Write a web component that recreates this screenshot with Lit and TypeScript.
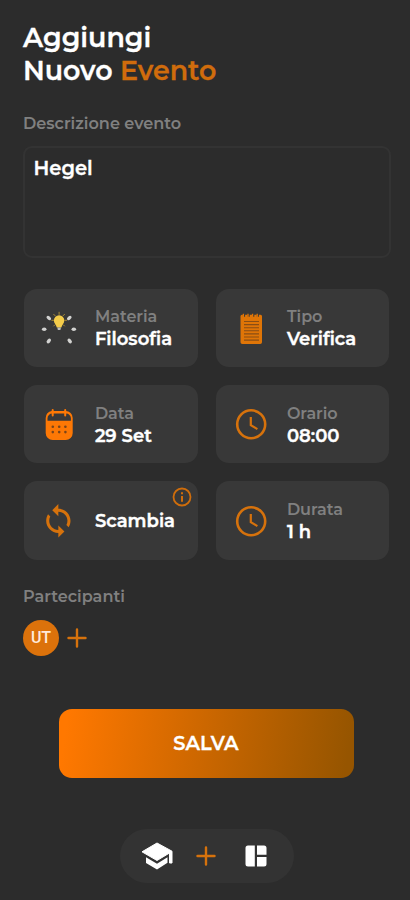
import { LitElement, html, css, svg } from "lit";
import { customElement, property } from "lit/decorators.js";

const burst = svg`
  <g fill="#d2d2d0">
    <ellipse cx="8.800" cy="9" rx="2.600" ry="1.700" transform="rotate(40 8.800 9)"/>
    <ellipse cx="29.300" cy="9" rx="2.600" ry="1.700" transform="rotate(-40 29.300 9)"/>
    <ellipse cx="4.200" cy="20.300" rx="2.300" ry="1.800"/>
    <ellipse cx="33.800" cy="20.300" rx="2.300" ry="1.800"/>
    <ellipse cx="8.800" cy="32" rx="2.700" ry="1.700" transform="rotate(-48 8.800 32)"/>
    <ellipse cx="29.700" cy="32" rx="2.700" ry="1.700" transform="rotate(48 29.700 32)"/>
  </g>
  <g transform="translate(.4 .8)">
  <path d="M18.700 2v3M13 4.200l2 2M24.400 4.200l-2 2M11 10.500h2.500M24 10.500h2.500M13 16.500l1.600-1.600M24.400 16.500l-1.600-1.600" stroke="#a98a35" stroke-width="1" fill="none"/>
  <path d="M18.700 5.400a5.200 5.200 0 0 1 5.200 5.200c0 2.800-2.400 4.200-2.900 7.200h-4.600c-.5-3-2.900-4.400-2.900-7.200a5.200 5.200 0 0 1 5.200-5.200z" fill="#f4cc4a"/>
  <path d="M16.900 17.800h3.700l-.6 2.400h-2.500z" fill="#bdbdb8"/>
  </g>`;

const notebook = svg`<g transform="translate(0 .7)">
  <path d="M8.500 6.500a1.500 1.500 0 0 1 1.500-1.500h18.500a1.500 1.500 0 0 1 1.500 1.500v26a1.800 1.800 0 0 1-1.800 1.800H10.300a1.800 1.800 0 0 1-1.800-1.800z" fill="#df7507"/>
  <path d="M12 3v4M16.600 3v4M21.200 3v4M25.800 3v4" stroke="#383838" stroke-width="2.200"/>
  <path d="M11.400 4v3.500M16 4v3.500M20.600 4v3.500M25.200 4v3.500" stroke="#df7507" stroke-width="1.300"/>
  <path d="M12 11.800h15M12 14.900h15M12 18h15M12 21.100h15M12 24.200h15M12 27.300h15M12 30.400h15" stroke="#8a4e14" stroke-width="1.100"/></g>`;

const calendar = svg`<g transform="translate(-.8 .5)">
  <path d="M12.500 5.500h14a7 7 0 0 1 7 7V27.500a7 7 0 0 1-7 7h-13a7 7 0 0 1-7-7V12.500a7 7 0 0 1 6-7z" fill="#fd7805"/>
  <path d="M8.300 15.300v-2.500a4.800 4.800 0 0 1 4.800-4.800h13.800a4.800 4.800 0 0 1 4.800 4.800v2.500z" fill="#383838"/>
  <path d="M13.500 4.500v5.500M26 4.500v5.500" stroke="#fd7805" stroke-width="2" stroke-linecap="round"/>
  <g fill="#7a451a"><circle cx="13.600" cy="21.300" r="1.300"/><circle cx="20" cy="21.300" r="1.300"/><circle cx="26.200" cy="21.300" r="1.300"/><circle cx="13.600" cy="26.600" r="1.300"/><circle cx="20" cy="26.600" r="1.300"/><circle cx="26.200" cy="26.600" r="1.300"/></g></g>`;

const clock = svg`<g fill="none" stroke="#d6720c"><circle cx="19.200" cy="19.300" r="14" stroke-width="2.600"/><path d="M18.800 12v8.200l6.600 3.900" stroke-width="2.200"/></g>`;

const swap = svg`<path transform="translate(.1 .6) scale(1.520)" fill="#d6720c" d="M12 4V1L8 5l4 4V6c3.310 0 6 2.690 6 6 0 1.010-.25 1.970-.7 2.800l1.460 1.460C19.540 15.030 20 13.570 20 12c0-4.420-3.580-8-8-8zm0 14c-3.310 0-6-2.690-6-6 0-1.010.25-1.970.7-2.800L5.240 7.740C4.460 8.970 4 10.430 4 12c0 4.420 3.580 8 8 8v3l4-4-4-4v3z"/>`;

const icons: Record<string, unknown> = { burst, notebook, calendar, clock, swap };

@customElement("event-card")
class EventCard extends LitElement {
  @property() icon = "";
  @property() label = "";
  @property() value = "";
  @property({ type: Boolean }) info = false;

  static styles = css`
    :host { display: flex; align-items: center; position: relative; box-sizing: border-box;
      background: #383838; border-radius: 13px; padding-left: 16.400px; }
    .icon { width: 38px; height: 38px; flex: none; }
    .copy { margin: 1px 0 0 17px; white-space: nowrap; }
    .label { font-size: 16px; line-height: 22px; font-weight: 600; color: #808080; }
    .value { font-size: 18px; line-height: 22px; font-weight: 600; color: #fff; -webkit-text-stroke: .4px #fff; }
    .info { position: absolute; right: 6px; top: 5.300px; width: 20px; height: 20px; }
  `;

  render() {
    return html`
      <svg class="icon" viewBox="0 0 38 38">${icons[this.icon]}</svg>
      <div class="copy">
        ${this.label ? html`<div class="label">${this.label}</div>` : ""}
        <div class="value">${this.value}</div>
      </div>
      ${this.info ? html`<svg class="info" viewBox="0 0 20 20"><circle cx="10" cy="10" r="8.500" fill="none" stroke="#cf6d0b" stroke-width="1.800"/><path d="M10 5.200v2.100M10 9v5.700" stroke="#cf6d0b" stroke-width="2"/></svg>` : ""}
    `;
  }
}

const cards = [
  { icon: "burst", label: "Materia", value: "Filosofia" },
  { icon: "notebook", label: "Tipo", value: "Verifica" },
  { icon: "calendar", label: "Data", value: "29 Set" },
  { icon: "clock", label: "Orario", value: "08:00" },
  { icon: "swap", label: "", value: "Scambia", info: true },
  { icon: "clock", label: "Durata", value: "1 h" },
];

@customElement("app-root")
class AppRoot extends LitElement {
  static styles = css`
    :host { display: block; box-sizing: border-box; height: 900px; padding: 22px 20px 0 23px; background: #2c2c2c;
      color: #fff; font-family: Montserrat, Inter, "Open Sans", sans-serif; }
    h1 { margin: 0; font-size: 26.900px; line-height: 32.500px; font-weight: 600; -webkit-text-stroke: .3px currentColor; }
    .accent { color: #d06c0c; }
    .caption { font-size: 16.100px; line-height: 20px; font-weight: 600; color: #808080; }
    .description { margin-top: 25.600px; }
    .field { box-sizing: border-box; width: 368px; height: 112px; margin-top: 13px; padding: 9.500px 8.500px; border: 2px solid #333;
      border-radius: 9px; font-size: 19.500px; line-height: 22px; font-weight: 600; -webkit-text-stroke: .3px #fff; }
    .cards { display: grid; grid-template-columns: 174px 173.500px; grid-auto-rows: 78.400px; gap: 18px; margin: 31px 0 0 .5px; }
    .people-title { margin-top: 26.500px; }
    .people { display: flex; align-items: center; gap: 8px; margin-top: 13.500px; }
    .avatar { width: 36px; height: 36px; border-radius: 50%; background: #dc720b; display: flex; align-items: center;
      justify-content: center; font-family: Roboto, sans-serif; font-size: 16px; font-weight: 500; color: #ffeadb; }
    .plus { width: 20px; height: 20px; }
    .save { display: flex; align-items: center; justify-content: center; width: 295px; height: 69px;
      margin: 53px 0 0 35.500px; border-radius: 13px; background: linear-gradient(98deg, #ff7800 3%, #965500 97%);
      font-size: 19.400px; font-weight: 600; -webkit-text-stroke: .3px #fff; }
    .nav { box-sizing: border-box; display: flex; align-items: center; width: 174px; height: 54px;
      margin: 51px 0 0 97px; padding-left: 20px; border-radius: 27px; background: #333; }
    .cap { width: 34px; height: 30px; }
    .nav .plus { margin-left: 22px; }
    .board { width: 22px; height: 22px; margin-left: 29px; }
  `;

  plus() {
    return html`<svg class="plus" viewBox="0 0 20 20"><path d="M10 1.500v17M1.500 10h17" stroke="#d6720c" stroke-width="2.400" stroke-linecap="round"/></svg>`;
  }

  render() {
    return html`
      <h1>Aggiungi<br>Nuovo <span class="accent">Evento</span></h1>
      <div class="caption description">Descrizione evento</div>
      <div class="field">Hegel</div>
      <div class="cards">
        ${cards.map((c) => html`<event-card .icon=${c.icon} .label=${c.label} .value=${c.value} .info=${!!c.info}></event-card>`)}
      </div>
      <div class="caption people-title">Partecipanti</div>
      <div class="people"><div class="avatar">UT</div>${this.plus()}</div>
      <div class="save">SALVA</div>
      <div class="nav">
        <svg class="cap" viewBox="0 0 34 30"><path d="M17 2 L32 10.200V22h-2.500V12L17 19.500 2 10.800z" fill="#fff" stroke="#fff" stroke-linejoin="round"/><path d="M6 16.200l11 6.500 10.500-6.500v5.500L17 28.500 6 22z" fill="#fff"/></svg>
        ${this.plus()}
        <svg class="board" viewBox="0 0 22 22" fill="#fff"><path d="M3 .500h6.800v21H3a2.500 2.500 0 0 1-2.500-2.500V3A2.500 2.500 0 0 1 3 .500zM12 .500h7A2.500 2.500 0 0 1 21.500 3v6.800H12zM12 12h9.500v7a2.500 2.500 0 0 1-2.500 2.500h-7z"/></svg>
      </div>`;
  }
}
